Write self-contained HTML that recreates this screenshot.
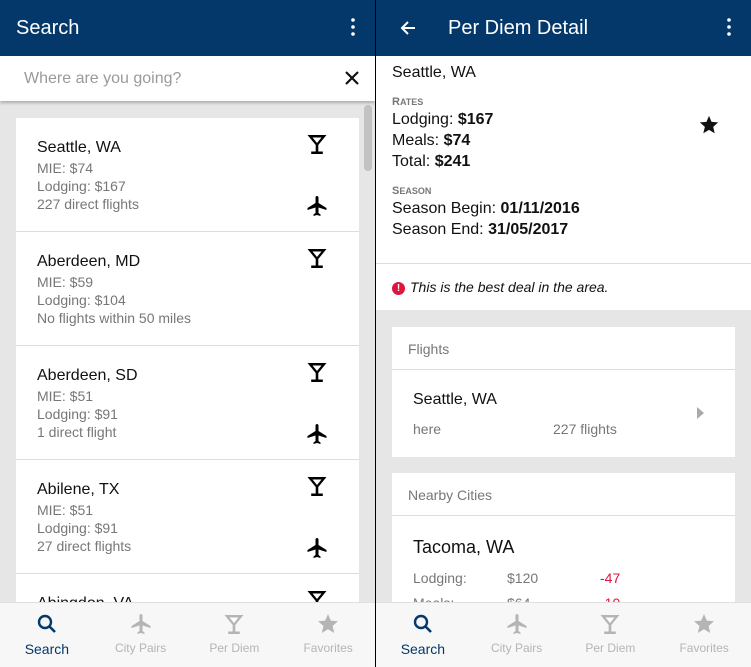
<!DOCTYPE html><html><head><style>
*{box-sizing:border-box;margin:0;padding:0}
body{width:751px;height:667px;overflow:hidden;font-family:"Liberation Sans",sans-serif;background:#000;position:relative}
.p{position:absolute;top:0;height:667px;background:#e6e6e6;overflow:hidden}
.hd{position:absolute;left:0;right:0;top:0;height:56px;background:#04386a;color:#fff;font-size:20px}
.nav{position:absolute;left:0;right:0;bottom:0;height:65px;background:#f7f7f7;border-top:1px solid #e0e0e0;display:flex}
.nav div{flex:1;text-align:center;font-size:12px;color:#b5b5b5;padding-top:9px}
.nav div.a{color:#04386a;font-size:14px}
.nav svg{display:block;margin:0 auto 5px}
.it{position:absolute;left:16px;width:343px;height:114px;background:#fff;border-bottom:1px solid #ddd;padding:21px 0 0 21px}
.it b{font-weight:normal;font-size:16px;color:#111;display:block;margin-bottom:2px}
.it span{display:block;font-size:14px;color:#777;line-height:18px}
.g{position:absolute;left:289px;top:14px}
.pl{position:absolute;left:289px;top:76px}
.card{position:absolute;left:16px;width:343px;background:#fff}
.kb{position:absolute;right:20px;top:18px}
</style></head><body>
<svg width="0" height="0" style="position:absolute"><defs>
<symbol id="gl" viewBox="0 0 24 24"><path d="M2.5 3h19l-8.2 10v6.5h4.5V22H6.2v-2.5h4.5V13z" fill="currentColor"/><path d="M7.5 5.5h9L12 11z" fill="#fff"/></symbol>
<symbol id="pl" viewBox="0 0 24 24"><path d="M21 16v-2l-8-5V3.5C13 2.7 12.3 2 11.5 2S10 2.7 10 3.5V9l-8 5v2l8-2.5V19l-2 1.5V22l3.5-1 3.5 1v-1.5L13 19v-5.5z" transform="translate(0.5 0)" fill="currentColor"/></symbol>
<symbol id="st" viewBox="0 0 24 24"><path d="M12 17.3l6.2 3.7-1.6-7L22 9.2l-7.2-.6L12 2 9.2 8.6 2 9.2 7.5 14l-1.7 7z" fill="currentColor"/></symbol>
<symbol id="sr" viewBox="0 0 24 24"><circle cx="10" cy="10" r="6" fill="none" stroke="currentColor" stroke-width="2.4"/><path d="M14 14l6 6" stroke="currentColor" stroke-width="2.6"/></symbol>
<symbol id="kb" viewBox="0 0 4 18"><circle cx="2" cy="2" r="1.8" fill="#fff"/><circle cx="2" cy="9" r="1.8" fill="#fff"/><circle cx="2" cy="16" r="1.8" fill="#fff"/></symbol>
</defs></svg>

<div class="p" style="left:0;width:375px">
<div class="card" style="top:118px;height:500px"></div>
<div class="it" style="top:118px"><b>Seattle, WA</b><span>MIE: $74</span><span>Lodging: $167</span><span>227 direct flights</span><svg class="g" width="24" height="24"><use href="#gl"/></svg><svg class="pl" width="24" height="24"><use href="#pl"/></svg></div>
<div class="it" style="top:232px"><b>Aberdeen, MD</b><span>MIE: $59</span><span>Lodging: $104</span><span>No flights within 50 miles</span><svg class="g" width="24" height="24"><use href="#gl"/></svg></div>
<div class="it" style="top:346px"><b>Aberdeen, SD</b><span>MIE: $51</span><span>Lodging: $91</span><span>1 direct flight</span><svg class="g" width="24" height="24"><use href="#gl"/></svg><svg class="pl" width="24" height="24"><use href="#pl"/></svg></div>
<div class="it" style="top:460px"><b>Abilene, TX</b><span>MIE: $51</span><span>Lodging: $91</span><span>27 direct flights</span><svg class="g" width="24" height="24"><use href="#gl"/></svg><svg class="pl" width="24" height="24"><use href="#pl"/></svg></div>
<div class="it" style="top:574px"><b>Abingdon, VA</b><svg class="g" width="24" height="24"><use href="#gl"/></svg></div>
<div style="position:absolute;left:364px;top:105px;width:8px;height:66px;background:#c2c2c2;border-radius:4px"></div>
<div style="position:absolute;left:0;top:56px;width:375px;height:45px;background:#fff;box-shadow:0 2px 3px rgba(0,0,0,.25);font-size:16px;color:#9a9a9a;padding:14px 0 0 24px">Where are you going?<svg style="position:absolute;right:16px;top:15px" width="14" height="14"><path d="M1 1l12 12M13 1L1 13" stroke="#111" stroke-width="2.2"/></svg></div>
<div class="hd"><span style="position:absolute;left:16px;top:17px">Search</span><svg class="kb" width="4" height="18"><use href="#kb"/></svg></div>
<div class="nav"><div class="a"><svg width="24" height="24"><use href="#sr"/></svg>Search</div><div><svg width="24" height="24"><use href="#pl"/></svg>City Pairs</div><div><svg width="24" height="24"><use href="#gl"/></svg>Per Diem</div><div><svg width="24" height="24"><use href="#st"/></svg>Favorites</div></div>
</div>

<div class="p" style="left:376px;width:375px">
<div style="position:absolute;left:0;top:56px;width:375px;height:207px;background:#fff;padding:6px 0 0 16px;font-size:16px;color:#111;line-height:21px">
<div>Seattle, WA</div>
<div style="font-size:11px;color:#777;font-weight:bold;margin-top:12px;line-height:14px">R<span style="font-size:9px">ATES</span></div>
<div>Lodging: <b>$167</b></div><div>Meals: <b>$74</b></div><div>Total: <b>$241</b></div>
<div style="font-size:11px;color:#777;font-weight:bold;margin-top:12px;line-height:14px">S<span style="font-size:9px">EASON</span></div>
<div>Season Begin: <b>01/11/2016</b></div><div>Season End: <b>31/05/2017</b></div>
<svg style="position:absolute;left:322px;top:58px" width="22" height="22"><use href="#st"/></svg>
</div>
<div style="position:absolute;left:0;top:263px;width:375px;height:47px;background:#fff;border-top:1px solid #ddd;padding:15px 0 0 16px;font-size:14px;font-style:italic;color:#111"><span style="display:inline-block;width:13px;height:13px;border-radius:50%;background:#e0143c;color:#fff;font-size:10px;font-style:normal;font-weight:bold;text-align:center;line-height:13px;vertical-align:1px;margin-right:5px">!</span>This is the best deal in the area.</div>
<div class="card" style="top:327px;height:130px">
<div style="height:43px;border-bottom:1px solid #ddd;font-size:14px;color:#777;padding:14px 0 0 16px">Flights</div>
<div style="padding:21px 0 0 21px;font-size:16px;color:#111">Seattle, WA</div>
<div style="position:absolute;left:21px;top:94px;font-size:14px;color:#777">here</div>
<div style="position:absolute;left:161px;top:94px;font-size:14px;color:#777">227 flights</div>
<div style="position:absolute;left:305px;top:80px;width:0;height:0;border-left:7px solid #aaa;border-top:6px solid transparent;border-bottom:6px solid transparent"></div>
</div>
<div class="card" style="top:473px;height:200px">
<div style="height:43px;border-bottom:1px solid #ddd;font-size:14px;color:#777;padding:14px 0 0 16px">Nearby Cities</div>
<div style="padding:21px 0 0 21px;font-size:18px;color:#111">Tacoma, WA</div>
<div style="position:absolute;left:21px;top:97px;font-size:14px;color:#777">Lodging:</div>
<div style="position:absolute;left:115px;top:97px;font-size:14px;color:#777">$120</div>
<div style="position:absolute;left:208px;top:97px;font-size:14px;color:#e0143c">-47</div>
<div style="position:absolute;left:21px;top:122px;font-size:14px;color:#777">Meals:</div>
<div style="position:absolute;left:115px;top:122px;font-size:14px;color:#777">$64</div>
<div style="position:absolute;left:208px;top:122px;font-size:14px;color:#e0143c">-10</div>
</div>
<div class="hd"><svg style="position:absolute;left:24px;top:20px" width="16" height="16"><path d="M15 8H2M8 2L2 8l6 6" fill="none" stroke="#fff" stroke-width="2"/></svg><span style="position:absolute;left:72px;top:17px">Per Diem Detail</span><svg class="kb" width="4" height="18"><use href="#kb"/></svg></div>
<div class="nav"><div class="a"><svg width="24" height="24"><use href="#sr"/></svg>Search</div><div><svg width="24" height="24"><use href="#pl"/></svg>City Pairs</div><div><svg width="24" height="24"><use href="#gl"/></svg>Per Diem</div><div><svg width="24" height="24"><use href="#st"/></svg>Favorites</div></div>
</div>
</body></html>
